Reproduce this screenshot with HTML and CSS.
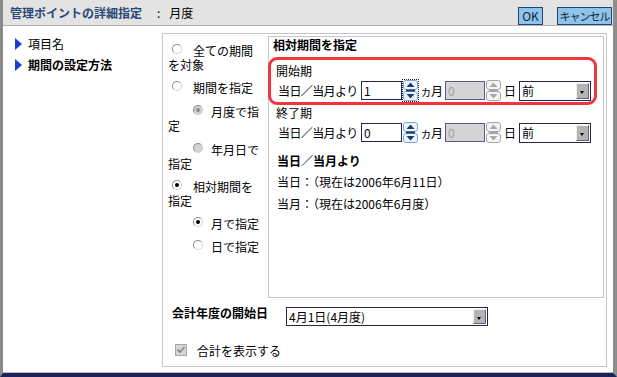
FILE: index.html
```html
<!DOCTYPE html>
<html>

<head>
    <title>管理ポイントの詳細指定</title>
    <link rel="stylesheet" href="styles.css">
</head>

<body>
    <div class="window">
        <div class="titlebar">
            <span class="title">管理ポイントの詳細指定</span>
            <span class="sep">:</span>
            <span class="subtitle">月度</span>
            <button type="button" class="btn btn-ok">OK</button>
            <button type="button" class="btn btn-cancel">キャンセル</button>
        </div>

        <div class="content">
            <ul class="nav">
                <li><span class="arrow"></span>項目名</li>
                <li class="current"><span class="arrow"></span>期間の設定方法</li>
            </ul>

            <div class="panel">
                <div class="panel-top">
                    <div class="options">
                        <div class="opt"><span class="radio"></span>全ての期間<br>を対象</div>
                        <div class="opt"><span class="radio"></span>期間を指定</div>
                        <div class="opt wide"><span class="radio sub disabled checked"></span>月度で指<br>定</div>
                        <div class="opt wide"><span class="radio sub disabled"></span>年月日で<br>指定</div>
                        <div class="opt"><span class="radio checked"></span>相対期間を<br>指定</div>
                        <div class="opt"><span class="radio sub checked"></span>月で指定</div>
                        <div class="opt"><span class="radio sub"></span>日で指定</div>
                    </div>

                    <div class="relative">
                        <div class="heading">相対期間を指定</div>

                        <div class="period-label">開始期</div>
                        <div class="period-row">
                            <span class="lbl">当日／当月より</span>
                            <input type="text" class="num" value="1">
                            <span class="spin focus">
                                <svg width="15" height="21" viewBox="0 0 15 21">
                                    <rect x="0.5" y="0.5" width="14" height="9" rx="2.5" fill="#eef4fb" stroke="#7ea5d6"/>
                                    <rect x="0.5" y="11.5" width="14" height="9" rx="2.5" fill="#eef4fb" stroke="#7ea5d6"/>
                                    <path d="M3.5 7 L7.5 2.5 L11.5 7 Z" fill="#1f3b73"/>
                                    <path d="M3.5 14 L11.5 14 L7.5 18.5 Z" fill="#1f3b73"/>
                                    <rect x="3" y="9.5" width="9" height="2" fill="#1f3b73"/>
                                </svg>
                            </span>
                            <span class="unit">ヵ月</span>
                            <input type="text" class="num off" value="0" disabled>
                            <span class="spin">
                                <svg width="15" height="21" viewBox="0 0 15 21">
                                    <rect x="0.5" y="0.5" width="14" height="9" rx="2.5" fill="#f4f4f4" stroke="#a4a4a4"/>
                                    <rect x="0.5" y="11.5" width="14" height="9" rx="2.5" fill="#f4f4f4" stroke="#a4a4a4"/>
                                    <path d="M3.5 7 L7.5 2.5 L11.5 7 Z" fill="#a8a8a8"/>
                                    <path d="M3.5 14 L11.5 14 L7.5 18.5 Z" fill="#a8a8a8"/>
                                    <rect x="3" y="9.5" width="9" height="2" fill="#a8a8a8"/>
                                </svg>
                            </span>
                            <span class="day">日</span>
                            <div class="select"><span>前</span><span class="select-btn"></span></div>
                        </div>

                        <div class="period-label end">終了期</div>
                        <div class="period-row">
                            <span class="lbl">当日／当月より</span>
                            <input type="text" class="num" value="0">
                            <span class="spin">
                                <svg width="15" height="21" viewBox="0 0 15 21">
                                    <rect x="0.5" y="0.5" width="14" height="9" rx="2.5" fill="#eef4fb" stroke="#7ea5d6"/>
                                    <rect x="0.5" y="11.5" width="14" height="9" rx="2.5" fill="#eef4fb" stroke="#7ea5d6"/>
                                    <path d="M3.5 7 L7.5 2.5 L11.5 7 Z" fill="#1f3b73"/>
                                    <path d="M3.5 14 L11.5 14 L7.5 18.5 Z" fill="#1f3b73"/>
                                    <rect x="3" y="9.5" width="9" height="2" fill="#1f3b73"/>
                                </svg>
                            </span>
                            <span class="unit">ヵ月</span>
                            <input type="text" class="num off" value="0" disabled>
                            <span class="spin">
                                <svg width="15" height="21" viewBox="0 0 15 21">
                                    <rect x="0.5" y="0.5" width="14" height="9" rx="2.5" fill="#f4f4f4" stroke="#a4a4a4"/>
                                    <rect x="0.5" y="11.5" width="14" height="9" rx="2.5" fill="#f4f4f4" stroke="#a4a4a4"/>
                                    <path d="M3.5 7 L7.5 2.5 L11.5 7 Z" fill="#a8a8a8"/>
                                    <path d="M3.5 14 L11.5 14 L7.5 18.5 Z" fill="#a8a8a8"/>
                                    <rect x="3" y="9.5" width="9" height="2" fill="#a8a8a8"/>
                                </svg>
                            </span>
                            <span class="day">日</span>
                            <div class="select"><span>前</span><span class="select-btn"></span></div>
                        </div>

                        <div class="base-title">当日／当月より</div>
                        <div class="base-line">当日：（現在は2006年6月11日）</div>
                        <div class="base-line second">当月：（現在は2006年6月度）</div>

                        <!-- annotation round the start period -->
                        <div class="highlight"></div>
                    </div>
                </div>

                <div class="fiscal">
                    <span class="fiscal-label">会計年度の開始日</span>
                    <div class="select wide-select"><span>4月1日(4月度)</span><span class="select-btn"></span></div>
                </div>

                <div class="total">
                    <svg class="check" width="12" height="12" viewBox="0 0 12 12">
                        <rect x="0.5" y="0.5" width="11" height="11" fill="#d6d6d6" stroke="#a6a6a6"/>
                        <path d="M2.5 5.5 L5 8 L9.5 3" fill="none" stroke="#8a8a8a" stroke-width="1.8"/>
                    </svg>
                    <span>合計を表示する</span>
                </div>
            </div>
        </div>
    </div>
</body>

</html>
```

FILE: styles.css
```css
* {
    box-sizing: border-box;
}

body {
    margin: 0;
    font-family: "Noto Sans CJK JP", "Noto Sans", sans-serif;
    font-size: 12px;
    color: #000;
    background-color: #fff;
}

.window {
    width: 617px;
    height: 377px;
    display: flex;
    flex-direction: column;
    border-left: 3px solid #8a8a8a;
    border-right: 4px solid #8e8e8e;
    border-bottom: 4px solid #1d2358;
}

/* title bar */

.titlebar {
    height: 26px;
    flex: none;
    display: flex;
    align-items: center;
    padding: 0 1px 0 7px;
    background-color: #e3e3e3;
    border-bottom: 1px solid #b4b4b4;
}

.title {
    color: #2a4878;
    font-weight: bold;
}

.sep {
    margin: 0 9px 0 15px;
}

.btn {
    align-self: flex-start;
    margin-top: 7px;
    height: 18px;
    padding: 0;
    border: 1px solid #21456c;
    background-color: #8ec3ea;
    color: #10243e;
    font-family: inherit;
    font-size: 12px;
    line-height: 16px;
}

.btn-ok {
    margin-left: auto;
    width: 25px;
}

.btn-cancel {
    margin-left: 14px;
    width: 55px;
    font-size: 11px;
    letter-spacing: -1px;
}

/* body */

.content {
    flex: 1;
    display: flex;
    border-bottom: 1px solid #b8b8b8;
}

.nav {
    width: 159px;
    flex: none;
    list-style: none;
    margin: 0;
    padding: 7px 0 0 12px;
}

.nav li {
    height: 21px;
    display: flex;
    align-items: center;
}

.nav li.current {
    font-weight: bold;
}

.arrow {
    width: 0;
    height: 0;
    margin-right: 6px;
    border-left: 7px solid #1b3ed2;
    border-top: 6px solid transparent;
    border-bottom: 6px solid transparent;
}

.panel {
    width: 445px;
    flex: none;
    margin: 7px 0 5px;
    border: 1px solid #c6c6c6;
    display: flex;
    flex-direction: column;
}

.panel-top {
    display: flex;
}

/* radio column */

.options {
    width: 105px;
    padding: 10px 0 0 5px;
    line-height: 14px;
}

.opt {
    margin-top: 9px;
}

.opt:first-child {
    margin-top: 0;
}

.opt.wide {
    margin-top: 10px;
}

.radio {
    display: inline-block;
    position: relative;
    width: 10px;
    height: 10px;
    margin: 0 11px 0 4px;
    vertical-align: top;
    border: 1px solid;
    border-color: #8e8e8e #d2d2d2 #d2d2d2 #8e8e8e;
    border-radius: 50%;
    background-color: #fff;
}

.radio.sub {
    margin-left: 25px;
    margin-right: 8px;
}

.radio.disabled {
    background-color: #d2d2d2;
}

.radio.checked::after {
    content: "";
    position: absolute;
    left: 2px;
    top: 2px;
    width: 4px;
    height: 4px;
    border-radius: 50%;
    background-color: #000;
}

.radio.disabled.checked::after {
    background-color: #8c8c8c;
}

/* relative period box */

.relative {
    position: relative;
    width: 336px;
    height: 262px;
    margin-top: 2px;
    border: 1px solid #c6c6c6;
    line-height: 16px;
}

.heading {
    padding-left: 4px;
    font-weight: bold;
}

.period-label {
    margin-top: 10px;
    padding-left: 7px;
}

.period-label.end {
    margin-top: 4px;
}

.period-row {
    height: 21px;
    margin-top: 1px;
    padding-left: 9px;
    display: flex;
    align-items: center;
}

.lbl {
    width: 83px;
    flex: none;
    white-space: nowrap;
    letter-spacing: -0.6px;
}

.num {
    width: 41px;
    height: 19px;
    margin: 0;
    padding: 0 2px;
    border: 1px solid #262650;
    font-family: inherit;
    font-size: 12px;
    color: #000;
    background-color: #fff;
}

.num.off {
    width: 40px;
    margin-left: 2px;
    border-color: #5a5a80;
    background-color: #d4d4d4;
    color: #a0a0a0;
}

.spin {
    display: flex;
    margin-left: 1px;
}

.spin.focus {
    outline: 1px dotted #222;
}

.unit {
    width: 23px;
    margin-left: 2px;
    white-space: nowrap;
    letter-spacing: -1px;
}

.day {
    margin-left: 3px;
}

.select {
    width: 72px;
    height: 20px;
    margin-left: 3px;
    display: flex;
    border: 1px solid #25254d;
    background-color: #fff;
    line-height: 18px;
}

.select span:first-child {
    padding-left: 2px;
    white-space: nowrap;
}

.select-btn {
    position: relative;
    width: 13px;
    margin: 1px 1px 1px auto;
    border: 1px solid;
    border-color: #eee #666 #666 #eee;
    background-color: #b4b4b4;
}

.select-btn::after {
    content: "";
    position: absolute;
    left: 3px;
    top: 7px;
    border-top: 3px solid #000;
    border-left: 2.5px solid transparent;
    border-right: 2.5px solid transparent;
}

.base-title {
    margin-top: 10px;
    padding-left: 8px;
    font-weight: bold;
}

.base-line {
    margin-top: 5px;
    padding-left: 8px;
}

.base-line.second {
    margin-top: 6px;
}

.highlight {
    position: absolute;
    left: -1px;
    top: 20px;
    width: 329px;
    height: 48px;
    border: 3px solid #f0353b;
    border-radius: 9px;
}

/* bottom settings */

.fiscal {
    display: flex;
    margin-top: 7px;
    padding-left: 9px;
}

.fiscal-label {
    width: 114px;
    line-height: 16px;
    font-weight: bold;
}

.select.wide-select {
    width: 202px;
    height: 19px;
    margin: 2px 0 0;
    line-height: 17px;
}

.total {
    height: 16px;
    margin-top: 16px;
    padding-left: 12px;
    display: flex;
    align-items: center;
}

.check {
    margin-right: 10px;
}
```
